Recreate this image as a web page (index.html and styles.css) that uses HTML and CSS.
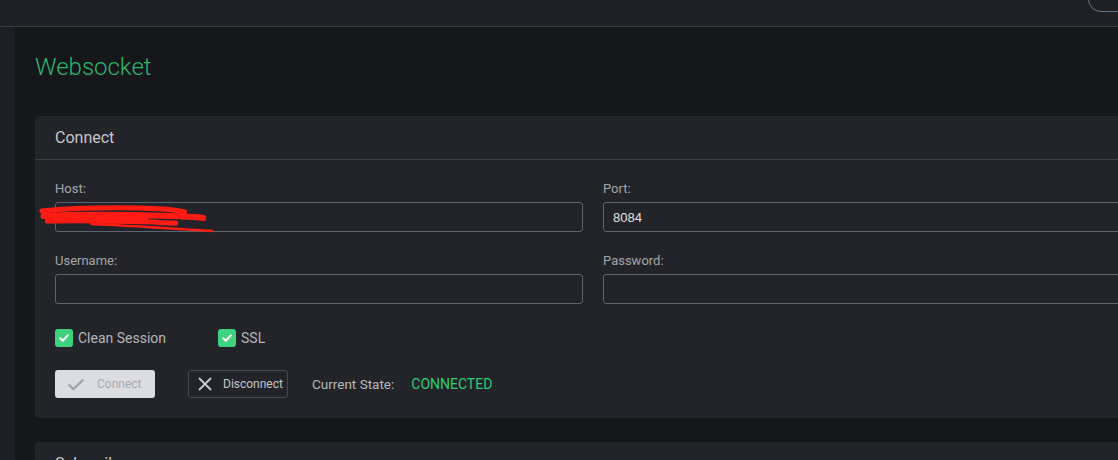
FILE: index.html
```html
<!DOCTYPE html>
<html>
<head>
<meta charset="utf-8">
<link rel="stylesheet" href="styles.css">
</head>
<body>
<header class="topbar">
  <div class="top-btn"></div>
</header>
<div class="layout">
  <aside class="sidebar"></aside>
  <main class="main">
    <h1 class="title">Websocket</h1>
    <section class="card">
      <div class="card-head">Connect</div>
      <div class="card-body">
        <div class="grid">
          <div class="field redacted">
            <label class="label">Host:</label>
            <input class="input" type="text" value="">
            <svg class="scribble" width="178" height="40" viewBox="0 0 200 40" preserveAspectRatio="none">
              <path d="M4 8 C40 5 90 4 140 6 C155 7 160 8 165 9" stroke="#ff1c14" stroke-width="5" fill="none" stroke-linecap="round"/>
              <path d="M6 13 C50 11 110 12 150 13 C170 14 180 14 186 15" stroke="#ff1c14" stroke-width="6" fill="none" stroke-linecap="round"/>
              <path d="M10 18 C50 17 90 18 130 19 C140 20 150 20 155 20" stroke="#ff1c14" stroke-width="5" fill="none" stroke-linecap="round"/>
              <path d="M60 21 C90 22 120 24 140 25 C160 26 180 27 196 28" stroke="#ff1c14" stroke-width="2.5" fill="none" stroke-linecap="round"/>
              <path d="M20 15 L120 17" stroke="#ff1c14" stroke-width="8" fill="none" stroke-linecap="round"/>
            </svg>
          </div>
          <div class="field">
            <label class="label">Port:</label>
            <input class="input" type="text" value="8084">
          </div>
          <div class="field">
            <label class="label">Username:</label>
            <input class="input" type="text" value="">
          </div>
          <div class="field">
            <label class="label">Password:</label>
            <input class="input" type="password" value="">
          </div>
        </div>
        <div class="checks">
          <div class="check">
            <span class="box"><svg width="12" height="12" viewBox="0 0 12 12"><path d="M2.2 6.2 L4.8 8.7 L9.8 3.4" stroke="#fff" stroke-width="2" fill="none" stroke-linecap="round" stroke-linejoin="round"/></svg></span>
            <span class="check-label">Clean Session</span>
          </div>
          <div class="check">
            <span class="box"><svg width="12" height="12" viewBox="0 0 12 12"><path d="M2.2 6.2 L4.8 8.7 L9.8 3.4" stroke="#fff" stroke-width="2" fill="none" stroke-linecap="round" stroke-linejoin="round"/></svg></span>
            <span class="check-label">SSL</span>
          </div>
        </div>
        <div class="actions">
          <button class="btn btn-connect" disabled>
            <svg width="18" height="13" viewBox="0 0 18 13"><path d="M1.5 6.5 L6.5 11.2 L16.5 1.5" stroke="#a3a4aa" stroke-width="2.4" fill="none"/></svg>
            <span>Connect</span>
          </button>
          <button class="btn btn-disconnect">
            <svg width="14" height="14" viewBox="0 0 14 14"><path d="M1 1 L13 13 M13 1 L1 13" stroke="#c9cacf" stroke-width="1.8" fill="none"/></svg>
            <span>Disconnect</span>
          </button>
          <span class="state-label">Current State:</span>
          <span class="state-value">CONNECTED</span>
        </div>
      </div>
    </section>
    <section class="card">
      <div class="card-head">Subscribe</div>
      <div class="card-body tall"></div>
    </section>
  </main>
</div>
</body>
</html>
```

FILE: styles.css
```css
* { box-sizing: border-box; }
html, body {
  margin: 0;
  padding: 0;
  width: 1118px;
  height: 460px;
  overflow: hidden;
  background: #16171b;
  font-family: Roboto, "Liberation Sans", sans-serif;
}
.topbar {
  height: 27px;
  background: #1f2025;
  border-bottom: 1px solid #3a3b41;
  display: flex;
  justify-content: flex-end;
  align-items: flex-start;
  overflow: hidden;
}
.top-btn {
  width: 60px;
  height: 26px;
  margin-top: -14px;
  margin-right: -30px;
  border: 1px solid #66778a;
  border-radius: 13px;
}
.layout {
  display: flex;
  height: 433px;
}
.sidebar {
  width: 15px;
  flex: none;
  background: #1e1f24;
}
.main {
  flex: none;
  padding: 25px 0 0 20px;
}
.title {
  margin: 0 0 34px;
  font-size: 24px;
  line-height: 30px;
  font-weight: 300;
  color: #2bb56d;
}
.card {
  width: 1116px;
  background: #232429;
  border-radius: 4px;
  margin-bottom: 24px;
}
.card-head {
  height: 44px;
  padding: 0 20px;
  border-bottom: 1px solid #3d3e44;
  font-size: 16px;
  line-height: 43px;
  color: #c6c7cb;
}
.card-body {
  padding: 20px 20px 20px;
}
.card-body.tall { height: 200px; }
.grid {
  display: grid;
  grid-template-columns: 1fr 1fr;
  column-gap: 20px;
  row-gap: 20px;
}
.field {
  position: relative;
  display: flex;
  flex-direction: column;
}
.label {
  font-size: 13px;
  line-height: 18px;
  margin-bottom: 4px;
  color: #a3a4a8;
}
.input {
  height: 30px;
  border: 1px solid #5b6570;
  border-radius: 3px;
  background: transparent;
  padding: 0 9px;
  font-family: "Liberation Sans", Arial, sans-serif;
  font-size: 13px;
  color: #e2e2e4;
  outline: none;
}
.scribble {
  position: absolute;
  left: -17px;
  top: 23px;
}
.checks {
  display: grid;
  grid-template-columns: 163px auto;
  margin-top: 25px;
  height: 18px;
}
.check {
  display: flex;
  align-items: center;
  gap: 5px;
}
.box {
  width: 18px;
  height: 18px;
  border-radius: 3px;
  background: #3ed27f;
  display: flex;
  align-items: center;
  justify-content: center;
}
.check-label {
  font-size: 14px;
  color: #b4b5b9;
  line-height: 18px;
}
.actions {
  display: flex;
  align-items: center;
  margin-top: 23px;
  height: 28px;
}
.btn {
  height: 28px;
  width: 100px;
  border-radius: 3px;
  display: flex;
  align-items: center;
  font-family: Roboto, "Liberation Sans", sans-serif;
  font-size: 12px;
  padding: 0;
}
.btn-connect {
  background: #dcdde3;
  border: none;
  color: #a8a9af;
  padding-left: 12px;
  gap: 12px;
}
.btn-disconnect {
  margin-left: 33px;
  background: transparent;
  border: 1px solid #47484e;
  color: #c4c5c9;
  padding-left: 9px;
  gap: 11px;
}
.state-label {
  margin-left: 24px;
  font-size: 13.5px;
  color: #b7b8bc;
}
.state-value {
  margin-left: 17px;
  font-size: 14px;
  color: #2fcc72;
}
```
